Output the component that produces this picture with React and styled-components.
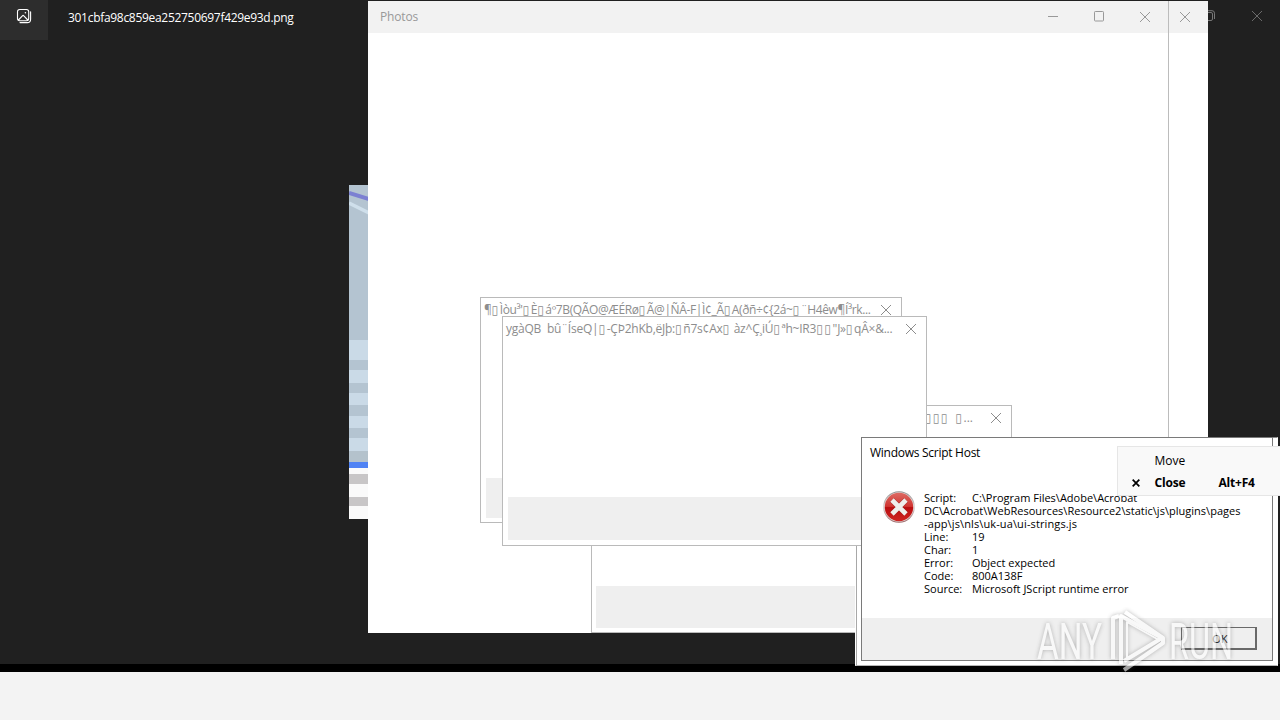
import React from "react";
import styled, { createGlobalStyle, css } from "styled-components";

const Global = createGlobalStyle`
  * { box-sizing: border-box; }
  body { margin: 0; overflow: hidden; background: #000; }
`;

const ui = `"Open Sans", "Noto Sans", "DejaVu Sans", sans-serif`;

const Screen = styled.div`
  width: 1280px;
  height: 720px;
  display: flex;
  flex-direction: column;
  overflow: hidden;
  position: relative;
  background: #000;
  font-family: ${ui};
`;

const Viewer = styled.div`
  height: 664px;
  background: #202020;
`;

const ViewerBar = styled.header`
  height: 40px;
  display: flex;
  align-items: center;
`;

const AppTile = styled.div`
  width: 48px;
  height: 40px;
  background: #2d2d2d;
  padding: 8px 0 0 16px;
  svg { display: block; }
`;

const FileName = styled.span`
  margin: -6px 0 0 20px;
  color: #fff;
  font-size: 12px;
  letter-spacing: ${(p) => p.$track}px;
  white-space: nowrap;
`;

const ViewerControls = styled.div`
  margin: -9px 17px 0 auto;
  display: flex;
  align-items: center;
  gap: 35px;
  color: #6b6b6b;
  svg { display: block; }
`;

const Gap = styled.div`
  height: 8px;
`;

const Taskbar = styled.footer`
  height: 48px;
  background: #f3f3f3;
`;

const Picture = styled.div`
  position: absolute;
  left: 349px;
  top: 185px;
  width: 20px;
  height: 334px;
  svg { display: block; }
`;

const Window = styled.section`
  position: absolute;
  left: ${(p) => p.$x}px;
  top: ${(p) => p.$y}px;
  width: ${(p) => p.$w}px;
  height: ${(p) => p.$h}px;
  background: #fff;
  border: 1px solid ${(p) => p.$edge || "#bababa"};
  display: flex;
  flex-direction: column;
  overflow: hidden;
`;

const PhotosWindow = styled(Window)`
  border-width: 0 ${(p) => (p.$divider ? 1 : 0)}px 0 0;
  border-color: #bcbcbc;
`;

const BackDialog = styled(Window)`
  border-color: #8b8b8b #fff #b5b5b5 #fff;
  box-shadow: inset 1px 0 #a8a8a8;
`;

const PhotosBar = styled.header`
  height: 32px;
  flex: none;
  background: #f2f2f2;
  display: flex;
  align-items: center;
  justify-content: ${(p) => (p.$end ? "flex-end" : "space-between")};
  padding: 0 ${(p) => p.$right}px 0 12px;
  color: #999;
  font-size: 12px;
  letter-spacing: -0.15px;
  svg { display: block; }
`;

const PhotosTitle = styled.span`
  margin-top: -2px;
`;

const Controls = styled.div`
  display: flex;
  gap: 34px;
`;

const DialogBar = styled.header`
  display: flex;
  align-items: center;
  gap: ${(p) => p.$gap || 0}px;
  justify-content: ${(p) => (p.$end ? "flex-end" : "space-between")};
  height: 24px;
  padding: 0 ${(p) => p.$right}px 0 ${(p) => p.$left}px;
  color: #8d8d8d;
  svg { display: block; flex: none; }
`;

const GarbledTitle = styled.span`
  font-size: 12px;
  line-height: 16px;
  letter-spacing: ${(p) => p.$track}px;
  white-space: pre;
`;

const Missing = styled.span`
  letter-spacing: 1.6px;
`;

const FooterStrip = styled.div`
  margin: auto 5px ${(p) => p.$bottom}px ${(p) => p.$left}px;
  height: ${(p) => p.$h}px;
  background: #efefef;
`;

const HostTitle = styled.h1`
  margin: 7px 0 0 8px;
  font-size: 12px;
  line-height: 16px;
  font-weight: 400;
  letter-spacing: -0.27px;
  color: #000;
`;

const HostBody = styled.div`
  display: flex;
  flex: 1;
  padding: 30px 0 0 21px;
  gap: 9px;
  svg { display: block; flex: none; }
`;

const Report = styled.dl`
  margin: 0;
  display: grid;
  grid-template-columns: 48px auto;
  grid-auto-rows: 13px;
  align-content: start;
  font-size: 11px;
  line-height: 13px;
  color: #000;
  white-space: nowrap;
`;

const cell = css`
  margin: 0;
  letter-spacing: ${(p) => p.$track || 0}px;
`;
const Term = styled.dt`${cell}`;
const Value = styled.dd`
  ${cell}
  ${(p) => p.$wide && "grid-column: 1 / 3;"}
`;

const HostFooter = styled.footer`
  height: 42px;
  background: #efefef;
  display: flex;
  justify-content: flex-end;
  padding: 9px 15px 0 0;
`;

const OkButton = styled.button`
  width: 76px;
  height: 23px;
  padding: 1px 0 0 3px;
  border: solid #696969;
  border-width: 1px 2px 2px 1px;
  background: #efefef;
  color: #222;
  font: 11px/18px ${ui};
`;

const Menu = styled.nav`
  position: absolute;
  left: 1117px;
  top: 446px;
  width: 164px;
  height: 50px;
  padding-top: 2px;
  background: #f9f9f9;
  border: 1px solid #e6e6e6;
`;

const MenuItem = styled.div`
  height: 22px;
  display: grid;
  grid-template-columns: 36.5px 64px auto;
  align-items: center;
  font-size: 12px;
  font-weight: ${(p) => (p.$strong ? 700 : 400)};
  letter-spacing: ${(p) => (p.$strong ? -0.2 : 0)}px;
  color: #000;
  svg { margin: 2px 0 0 14px; }
`;

const Watermark = styled.div`
  position: absolute;
  left: 1030px;
  top: 604px;
  opacity: 0.62;
  svg { display: block; filter: drop-shadow(0 0 2px rgba(70, 70, 70, 0.6)); }
`;

function Cross({ size = 12, width = 1 }) {
  return (
    <svg width={size} height={size} viewBox="0 0 12 12" fill="none" stroke="currentColor" strokeWidth={width}>
      <path d="M1 1l10 10M11 1L1 11" />
    </svg>
  );
}

function Minimize() {
  return (
    <svg width="12" height="11" fill="none" stroke="currentColor">
      <path d="M1 5.5h10" />
    </svg>
  );
}

function Maximize() {
  return (
    <svg width="12" height="11" fill="none" stroke="currentColor">
      <rect x="1.5" y=".5" width="9" height="9.5" rx=".8" />
    </svg>
  );
}

function Restore() {
  return (
    <svg width="12" height="11" fill="none" stroke="#777">
      <rect x=".5" y="2.5" width="8" height="8" rx="1.5" />
      <path d="M2.5.7H8a2.5 2.5 0 0 1 2.5 2.5V9" />
    </svg>
  );
}

function PhotosIcon() {
  return (
    <svg width="16" height="16" fill="none" stroke="#fff" strokeWidth="1.1" strokeLinecap="round" strokeLinejoin="round">
      <rect x="1.5" y="1.5" width="11.2" height="11.2" rx="2.2" />
      <path d="M14.6 3.8v7.4a3.4 3.4 0 0 1-3.4 3.4H4M2.4 12l4-4.2q.7-.7 1.4 0l4 4.2" />
      <circle cx="9.4" cy="4.8" r=".8" fill="#fff" stroke="none" />
    </svg>
  );
}

function ErrorIcon() {
  return (
    <svg width="32" height="32" viewBox="0 0 32 32">
      <defs>
        <linearGradient id="rim" x1="0" y1="0" x2="0" y2="1">
          <stop offset="0" stopColor="#8f8f8f" />
          <stop offset=".5" stopColor="#d9cccc" />
          <stop offset="1" stopColor="#9c6b6b" />
        </linearGradient>
        <linearGradient id="red" x1="0" y1="0" x2="0" y2="1">
          <stop offset="0" stopColor="#dd6a63" />
          <stop offset=".48" stopColor="#cf3430" />
          <stop offset=".52" stopColor="#b90e10" />
          <stop offset="1" stopColor="#d02422" />
        </linearGradient>
      </defs>
      <circle cx="16" cy="16" r="15.8" fill="url(#rim)" />
      <circle cx="16" cy="16" r="14.8" fill="#e5d5d4" />
      <circle cx="16" cy="16" r="14.2" fill="url(#red)" />
      <path d="M9 9l14 14M23 9L9 23" stroke="#8d1413" strokeWidth="6" opacity=".5" />
      <path d="M9 9l14 14M23 9L9 23" stroke="#efeeec" strokeWidth="4.8" />
    </svg>
  );
}

const bands = [
  [0, 155, "#b4c4d1"], [155, 20, "#cadae7"], [175, 10, "#b4c4d1"],
  [185, 13, "#cadae7"], [198, 10, "#b4c4d1"], [208, 12, "#cadae7"],
  [220, 11, "#b4c4d1"], [231, 12, "#cadae7"], [243, 10, "#b4c4d1"],
  [253, 13, "#cadae7"], [266, 11, "#b4c2cc"], [277, 6, "#5083f4"],
  [283, 6, "#fafafa"], [289, 10, "#c8c6c7"], [299, 13, "#fafafa"],
  [312, 9, "#c8c6c7"], [321, 13, "#fafafa"],
];

function PictureEdge() {
  return (
    <svg width="20" height="334">
      {bands.map(([y, h, fill]) => (
        <rect key={y} y={y} width="20" height={h} fill={fill} />
      ))}
      <path d="M0 8l20 6" stroke="#7c80d2" strokeWidth="4" />
      <path d="M0 18l20 10" stroke="#cfdfeb" strokeWidth="3.5" />
    </svg>
  );
}

const report = [
  ["Line:", "19"],
  ["Char:", "1"],
  ["Error:", "Object expected"],
  ["Code:", "800A138F"],
  ["Source:", "Microsoft JScript runtime error"],
];

function Garbled({ text, track }) {
  return (
    <GarbledTitle $track={track}>
      {text.split(/(▯)/).map((part, i) => (part === "▯" ? <Missing key={i}>▯</Missing> : part))}
    </GarbledTitle>
  );
}

export default function App() {
  return (
    <Screen>
      <Global />
      <Viewer>
        <ViewerBar>
          <AppTile><PhotosIcon /></AppTile>
          <FileName $track={-0.3}>301cbfa98c859ea252750697f429e93d.png</FileName>
          <ViewerControls><Restore /><Cross /></ViewerControls>
        </ViewerBar>
      </Viewer>
      <Gap />
      <Taskbar />

      <Picture><PictureEdge /></Picture>

      <PhotosWindow $x={368} $y={1} $w={840} $h={632}>
        <PhotosBar $end $right={17}><Cross /></PhotosBar>
      </PhotosWindow>
      <PhotosWindow $divider $x={368} $y={1} $w={801} $h={632}>
        <PhotosBar $right={17}>
          <PhotosTitle>Photos</PhotosTitle>
          <Controls><Minimize /><Maximize /><Cross /></Controls>
        </PhotosBar>
      </PhotosWindow>

      <Window $x={591} $y={405} $w={421} $h={228}>
        <DialogBar $end $gap={17} $right={9} $left={4}>
          <Garbled track={0} text="▯▯▯  ▯..." />
          <Cross />
        </DialogBar>
        <FooterStrip $left={4} $bottom={4} $h={42} />
      </Window>
      <Window $x={480} $y={297} $w={422} $h={226}>
        <DialogBar $right={9} $left={3}>
          <Garbled track={-0.37} text="¶▯Ìòu³'▯È▯áº7B(QÃO@ÆÉRø▯Ã@|ÑÂ-F|Ì¢_Ã▯A(ðñ÷¢{2á~▯¨H4êw¶Í³rk..." />
          <Cross />
        </DialogBar>
        <FooterStrip $left={5} $bottom={4} $h={40} />
      </Window>
      <BackDialog $x={855} $y={437} $w={423} $h={229} />
      <Window $x={502} $y={316} $w={425} $h={230}>
        <DialogBar $right={9} $left={3}>
          <Garbled track={-0.23} text={"ygàQB  bû¨ÍseQ|▯-ÇÞ2hKb,ëJþ:▯ñ7s¢Ax▯ àz^Ç¸iÚ▯ªh~IR3▯▯\"J»▯qÂ×&..."} />
          <Cross />
        </DialogBar>
        <FooterStrip $left={5} $bottom={5} $h={43} />
      </Window>

      <Window $x={861} $y={437} $w={412} $h={224} $edge="#7a7a7a">
        <HostTitle>Windows Script Host</HostTitle>
        <HostBody>
          <ErrorIcon />
          <Report>
            <Term>Script:</Term>
            <Value>C:\Program Files\Adobe\Acrobat</Value>
            <Value $wide $track={0.02}>DC\Acrobat\WebResources\Resource2\static\js\plugins\pages</Value>
            <Value $wide $track={0.12}>-app\js\nls\uk-ua\ui-strings.js</Value>
            {report.map(([term, value]) => (
              <React.Fragment key={term}>
                <Term>{term}</Term>
                <Value>{value}</Value>
              </React.Fragment>
            ))}
          </Report>
        </HostBody>
        <HostFooter><OkButton>OK</OkButton></HostFooter>
      </Window>

      <Menu>
        <MenuItem><span /><span>Move</span></MenuItem>
        <MenuItem $strong><Cross size={8} width={2.6} /><span>Close</span><span>Alt+F4</span></MenuItem>
      </Menu>

      <Watermark>
        <svg width="210" height="72" fill="none">
          <g fill="#fff" fontFamily="Roboto" fontSize="50" fontWeight="400">
            <text x="7" y="55" textLength="65" lengthAdjust="spacingAndGlyphs">ANY</text>
            <text x="139" y="55" textLength="64" lengthAdjust="spacingAndGlyphs">RUN</text>
          </g>
          <g stroke="#fff" strokeWidth="4" strokeLinejoin="round">
            <path d="M91 60V12l41 22-38 23" />
            <path d="M83 55V14l6-2M95 8l38 26v5L94 66" />
            <path d="M97 18l32 18-32 19z" strokeWidth="2" />
          </g>
        </svg>
      </Watermark>
    </Screen>
  );
}
